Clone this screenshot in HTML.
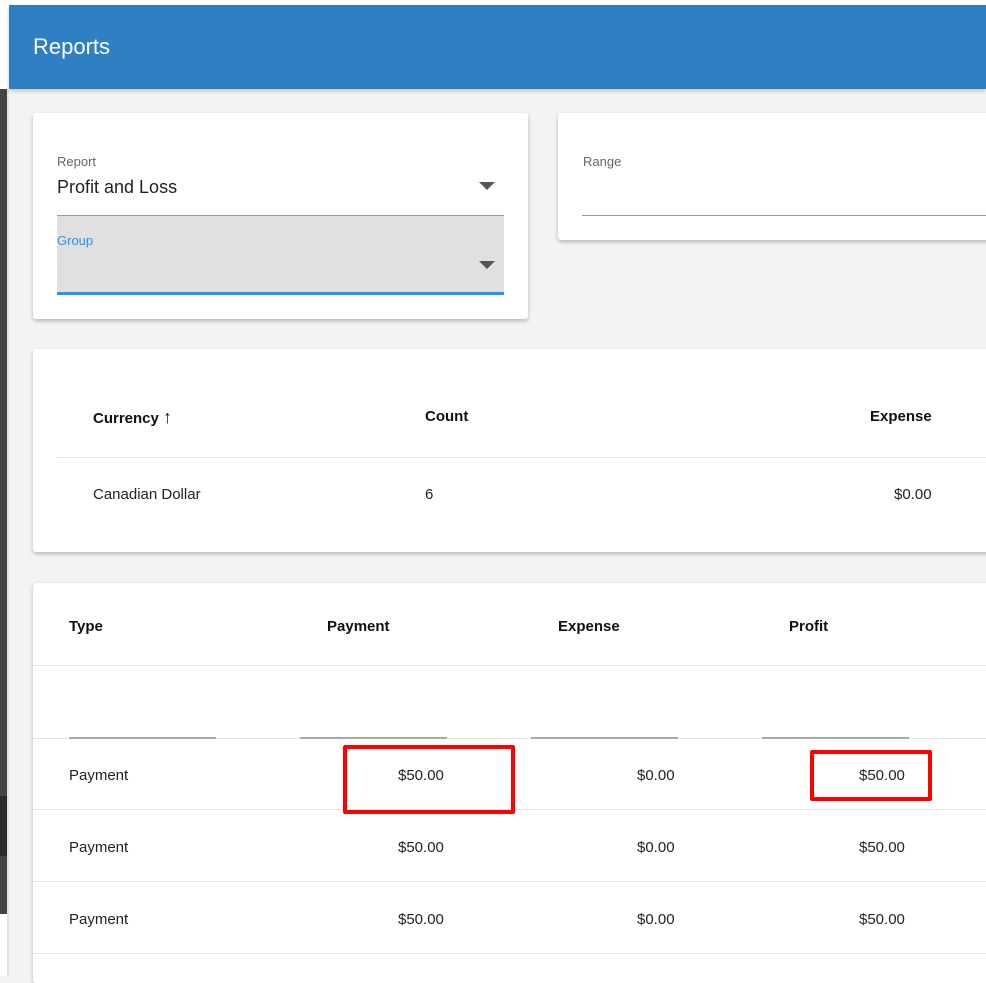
<!DOCTYPE html>
<html><head><style>
*{box-sizing:border-box;margin:0;padding:0}
body{width:986px;height:976px;overflow:hidden;background:#f2f3f5;font-family:"Liberation Sans",sans-serif;position:relative;color:#222}
.abs{position:absolute}
.card{position:absolute;background:#fff;border-radius:3px;box-shadow:0 2px 4px rgba(0,0,0,.25)}
.t{position:absolute;white-space:nowrap}
.hd{font-weight:bold;font-size:15px;color:#111}
.c{font-size:15px;color:#222}
.line{position:absolute;height:1px;background:#e2e2e2}
.red{position:absolute;border:4px solid #f00;border-radius:2px}
</style></head><body>
<div class="abs" style="left:0;top:0;width:986px;height:5px;background:#fff"></div>
<div class="abs" style="left:0;top:0;width:9px;height:976px;background:#fff"></div>
<div class="abs" style="left:0;top:89px;width:7px;height:825px;background:#444"></div>
<div class="abs" style="left:0;top:796px;width:7px;height:60px;background:#2b2b2b"></div>
<div class="abs" style="left:7px;top:89px;width:2px;height:887px;background:#e0e0e0"></div>
<div class="abs" style="left:9px;top:5px;width:977px;height:84px;background:#2f7fc3;box-shadow:0 2px 4px rgba(0,0,0,.2)"></div>
<div class="t" style="left:33px;top:34px;font-size:22px;color:#fff">Reports</div>

<div class="card" style="left:33px;top:113px;width:495px;height:206px">
 <div class="t" style="left:24px;top:41px;font-size:13px;color:#666">Report</div>
 <div class="t" style="left:24px;top:64px;font-size:18px;color:#222">Profit and Loss</div>
 <div class="abs" style="left:446px;top:69px;border-left:8px solid transparent;border-right:8px solid transparent;border-top:8px solid #555"></div>
 <div class="abs" style="left:24px;top:102px;width:447px;height:80px;background:#e0e0e0;border-top:1px solid #999;border-bottom:3px solid #2196f3"></div>
 <div class="t" style="left:24px;top:120px;font-size:13px;color:#2196f3">Group</div>
 <div class="abs" style="left:446px;top:148px;border-left:8px solid transparent;border-right:8px solid transparent;border-top:8px solid #555"></div>
</div>

<div class="card" style="left:558px;top:113px;width:440px;height:127px">
 <div class="t" style="left:25px;top:41px;font-size:13px;color:#666">Range</div>
 <div class="abs" style="left:24px;top:102px;width:420px;height:1px;background:#999"></div>
</div>

<div class="card" style="left:33px;top:349px;width:970px;height:203px">
 <div class="t hd" style="left:60px;top:58px">Currency <span style="font-size:18px">&#8593;</span></div>
 <div class="t hd" style="left:392px;top:59px">Count</div>
 <div class="t hd" style="left:837px;top:59px">Expense</div>
 <div class="line" style="left:24px;top:108px;width:940px"></div>
 <div class="t c" style="left:60px;top:137px">Canadian Dollar</div>
 <div class="t c" style="left:392px;top:137px">6</div>
 <div class="t c" style="left:861px;top:137px">$0.00</div>
</div>

<div class="card" style="left:33px;top:583px;width:970px;height:400px">
 <div class="t hd" style="left:36px;top:35px">Type</div>
 <div class="t hd" style="left:294px;top:35px">Payment</div>
 <div class="t hd" style="left:525px;top:35px">Expense</div>
 <div class="t hd" style="left:756px;top:35px">Profit</div>
 <div class="line" style="left:0;top:82px;width:970px"></div>
 <div class="line" style="left:0;top:155px;width:970px"></div>
 <div class="abs" style="left:36px;top:154px;width:147px;height:2px;background:#aaa"></div>
 <div class="abs" style="left:267px;top:154px;width:147px;height:2px;background:#aaa"></div>
 <div class="abs" style="left:498px;top:154px;width:147px;height:2px;background:#aaa"></div>
 <div class="abs" style="left:729px;top:154px;width:147px;height:2px;background:#aaa"></div>
 <div class="t c" style="left:36px;top:184px">Payment</div>
 <div class="t c" style="left:365px;top:184px">$50.00</div>
 <div class="t c" style="left:604px;top:184px">$0.00</div>
 <div class="t c" style="left:826px;top:184px">$50.00</div>
 <div class="line" style="left:0;top:226px;width:970px"></div>
 <div class="t c" style="left:36px;top:256px">Payment</div>
 <div class="t c" style="left:365px;top:256px">$50.00</div>
 <div class="t c" style="left:604px;top:256px">$0.00</div>
 <div class="t c" style="left:826px;top:256px">$50.00</div>
 <div class="line" style="left:0;top:298px;width:970px"></div>
 <div class="t c" style="left:36px;top:328px">Payment</div>
 <div class="t c" style="left:365px;top:328px">$50.00</div>
 <div class="t c" style="left:604px;top:328px">$0.00</div>
 <div class="t c" style="left:826px;top:328px">$50.00</div>
 <div class="line" style="left:0;top:370px;width:970px"></div>
</div>

<div class="red" style="left:343px;top:745px;width:172px;height:69px"></div>
<div class="red" style="left:810px;top:750px;width:122px;height:51px"></div>
</body></html>
